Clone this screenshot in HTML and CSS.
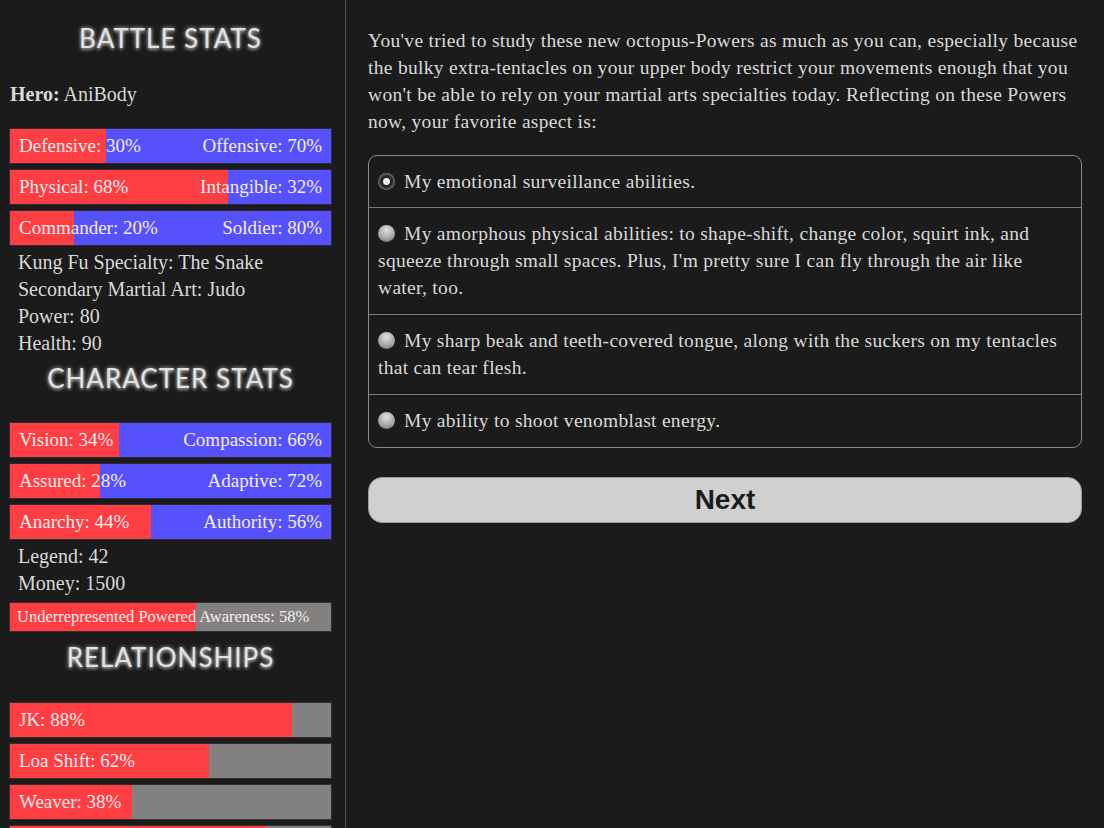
FILE: index.html
```html
<!DOCTYPE html>
<html lang="en">
<head>
  <meta charset="UTF-8">
  <title>AniBody</title>
  <link rel="stylesheet" href="styles.css">
</head>
<body>
  <div class="stats-panel">
    <h2>Battle Stats</h2>
    <div class="hero"><b>Hero:</b> AniBody</div>

    <div class="bar" style="--p:30%"><span>Defensive: 30%</span><span>Offensive: 70%</span></div>
    <div class="bar" style="--p:68%"><span>Physical: 68%</span><span>Intangible: 32%</span></div>
    <div class="bar" style="--p:20%"><span>Commander: 20%</span><span>Soldier: 80%</span></div>

    <div class="stat-lines">
      <div>Kung Fu Specialty: The Snake</div>
      <div>Secondary Martial Art: Judo</div>
      <div>Power: 80</div>
      <div>Health: 90</div>
    </div>

    <h2>Character Stats</h2>
    <div class="bar" style="--p:34%"><span>Vision: 34%</span><span>Compassion: 66%</span></div>
    <div class="bar" style="--p:28%"><span>Assured: 28%</span><span>Adaptive: 72%</span></div>
    <div class="bar" style="--p:44%"><span>Anarchy: 44%</span><span>Authority: 56%</span></div>

    <div class="stat-lines">
      <div>Legend: 42</div>
      <div>Money: 1500</div>
    </div>

    <div class="bar single small" style="--p:58%"><span>Underrepresented Powered Awareness: 58%</span></div>

    <h2>Relationships</h2>
    <div class="bar single" style="--p:88%"><span>JK: 88%</span></div>
    <div class="bar single" style="--p:62%"><span>Loa Shift: 62%</span></div>
    <div class="bar single" style="--p:38%"><span>Weaver: 38%</span></div>
    <div class="bar single" style="--p:80%"></div>
  </div>

  <div class="story">
    <p class="intro">You've tried to study these new octopus-Powers as much as you can, especially because the bulky extra-tentacles on your upper body restrict your movements enough that you won't be able to rely on your martial arts specialties today. Reflecting on these Powers now, your favorite aspect is:</p>

    <div class="choices">
      <label class="choice"><span class="radio checked"></span>My emotional surveillance abilities.</label>
      <label class="choice"><span class="radio"></span>My amorphous physical abilities: to shape-shift, change color, squirt ink, and squeeze through small spaces. Plus, I'm pretty sure I can fly through the air like water, too.</label>
      <label class="choice"><span class="radio"></span>My sharp beak and teeth-covered tongue, along with the suckers on my tentacles that can tear flesh.</label>
      <label class="choice"><span class="radio"></span>My ability to shoot venomblast energy.</label>
    </div>

    <button class="next-btn">Next</button>
  </div>
</body>
</html>
```

FILE: styles.css
```css
* {
  box-sizing: border-box;
}
body {
  margin: 0;
  height: 100vh;
  background: #1b1b1b;
  color: #d9d9d9;
  font-family: 'Liberation Serif', 'DejaVu Serif', serif;
  overflow: hidden;
  display: flex;
}
.stats-panel {
  width: 346px;
  flex-shrink: 0;
  height: 100vh;
  overflow: hidden;
  padding: 0 13px 0 9px;
  border-right: 1px solid #4f4f4f;
}
h2 {
  margin: 20px 0 25px;
  text-align: center;
  font-family: 'Lato', 'Open Sans', sans-serif;
  font-weight: 400;
  font-size: 26px;
  line-height: 36px;
  letter-spacing: 1px;
  text-transform: uppercase;
  color: #e2e2e2;
  text-shadow: 0 0 4px rgba(255, 255, 255, 0.75), 0 2px 3px rgba(255, 255, 255, 0.35);
}
.stat-lines + h2 {
  margin-top: 3px;
  margin-bottom: 26px;
}
.bar.small + h2 {
  margin-top: 7px;
  margin-bottom: 27px;
}
.hero {
  font-size: 20px;
  line-height: 27px;
  padding-left: 1px;
  margin-bottom: 20px;
}
.bar {
  height: 36px;
  margin-bottom: 5px;
  border: 1px solid #2c2c3a;
  background: linear-gradient(to right, #ff3e44 var(--p), #5651fd var(--p));
  display: flex;
  justify-content: space-between;
  align-items: center;
  padding: 0 9px;
  font-size: 19px;
  color: #f5eeee;
  white-space: nowrap;
}
.bar.single {
  border-color: #303030;
  background: linear-gradient(to right, #ff3e44 var(--p), #82817f var(--p));
}
.bar.small {
  height: 30px;
  font-size: 16.5px;
  padding: 0 7px;
  margin-top: 5px;
}
.stat-lines {
  padding-left: 9px;
  font-size: 20px;
  line-height: 27px;
  margin-top: -2px;
}
.story {
  flex: 1;
  padding: 27px 22px 0 22px;
}
.intro {
  margin: 0 0 20px;
  font-size: 19.5px;
  line-height: 27px;
  letter-spacing: 0.3px;
}
.choices {
  border: 1px solid #8a8a8a;
  border-radius: 9px;
}
.choice {
  display: block;
  padding: 12px 9px 13px;
  font-size: 19.5px;
  line-height: 27px;
  letter-spacing: 0.3px;
  border-top: 1px solid #7a7a7a;
}
.choice:first-child {
  border-top: none;
  padding-bottom: 12px;
}
.radio {
  display: inline-block;
  width: 17px;
  height: 17px;
  border-radius: 50%;
  margin-right: 9px;
  vertical-align: -2px;
  background: radial-gradient(circle at 50% 30%, #e0e0e0, #a8a8a8 55%, #6a6a6a);
}
.radio.checked {
  background: radial-gradient(circle, #f4f4f4 0 3px, #222 4px, #2e2e2e 6px, #777 8.5px);
}
.next-btn {
  display: block;
  width: 100%;
  margin-top: 29px;
  height: 46px;
  border: 1px solid #9a9a9a;
  border-radius: 14px;
  background: #d0d0d0;
  color: #1c1c1c;
  font-family: 'Liberation Sans', Arial, sans-serif;
  font-weight: 700;
  font-size: 28px;
  cursor: pointer;
}
```
